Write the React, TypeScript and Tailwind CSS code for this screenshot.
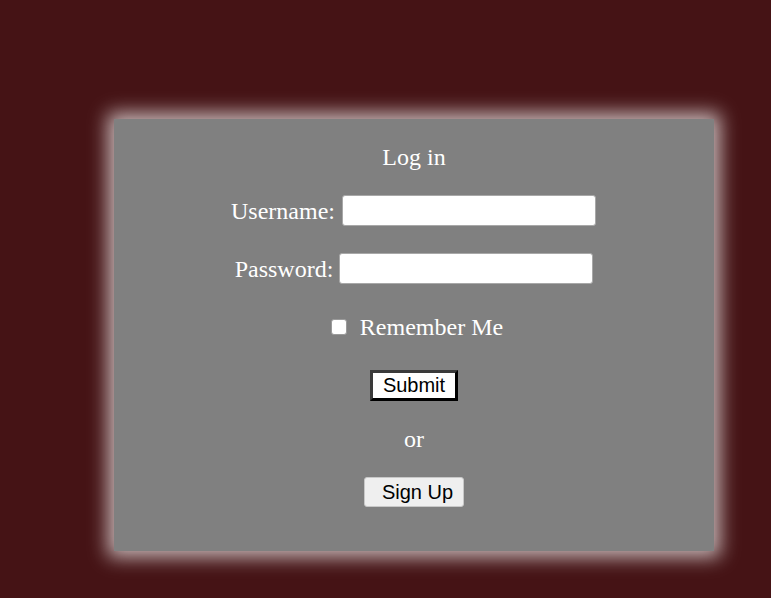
import React, { useState } from "react";

const LoginCard = () => {
  const [username, setUsername] = useState("");
  const [password, setPassword] = useState("");
  const [remember, setRemember] = useState(false);

  return (
    <div className="ml-[114px] mt-[119px] w-[600px] h-[432px] bg-[#808080] shadow-[0_0_18px_6px_rgba(255,255,255,0.7)] flex flex-col items-center pt-6 text-white text-[24px] font-['Liberation_Serif',serif]">
      <div className="leading-[28px]">Log in</div>

      {/* Username */}
      <div className="mt-6 flex items-center gap-[7px] h-[31px] pr-[1px]">
        <label className="leading-[28px]">Username:</label>
        <input
          type="text"
          value={username}
          onChange={(e) => setUsername(e.target.value)}
          className="w-[254px] h-[31px] bg-white border border-[#a8a8a8] rounded-[3px] text-black text-base px-1 outline-none"
        />
      </div>

      {/* Password */}
      <div className="mt-[27px] flex items-center gap-[6px] h-[31px]">
        <label className="leading-[28px]">Password:</label>
        <input
          type="password"
          value={password}
          onChange={(e) => setPassword(e.target.value)}
          className="w-[254px] h-[31px] bg-white border border-[#a8a8a8] rounded-[3px] text-black text-base px-1 outline-none"
        />
      </div>

      {/* Remember me */}
      <div className="mt-[29px] flex items-center gap-[13px] h-[28px] ml-[6px]">
        <input
          type="checkbox"
          checked={remember}
          onChange={(e) => setRemember(e.target.checked)}
          className="appearance-none w-4 h-4 m-0 bg-white border border-[#9a9a9a] rounded-[3px] checked:bg-[#1a73e8]"
        />
        <span className="leading-[28px]">Remember Me</span>
      </div>

      <button className="mt-[29px] h-[31px] px-[10px] bg-white text-black text-[20px] leading-[23px] font-['Liberation_Sans',Arial,sans-serif] border-[3px] border-t-[#3a3a3a] border-l-[#3a3a3a] border-b-black border-r-black">
        Submit
      </button>

      <div className="mt-6 leading-[28px]">or</div>

      <button className="mt-6 h-[30px] pl-[17px] pr-[10px] bg-[#efefef] text-black text-[20px] leading-[23px] font-['Liberation_Sans',Arial,sans-serif] border border-[#c8c8c8] rounded-[3px]">
        Sign Up
      </button>
    </div>
  );
};

const App = () => {
  return (
    <div className="min-h-[598px] w-full bg-[#451315] overflow-hidden pb-[47px]">
      <LoginCard />
    </div>
  );
};

export default App;
